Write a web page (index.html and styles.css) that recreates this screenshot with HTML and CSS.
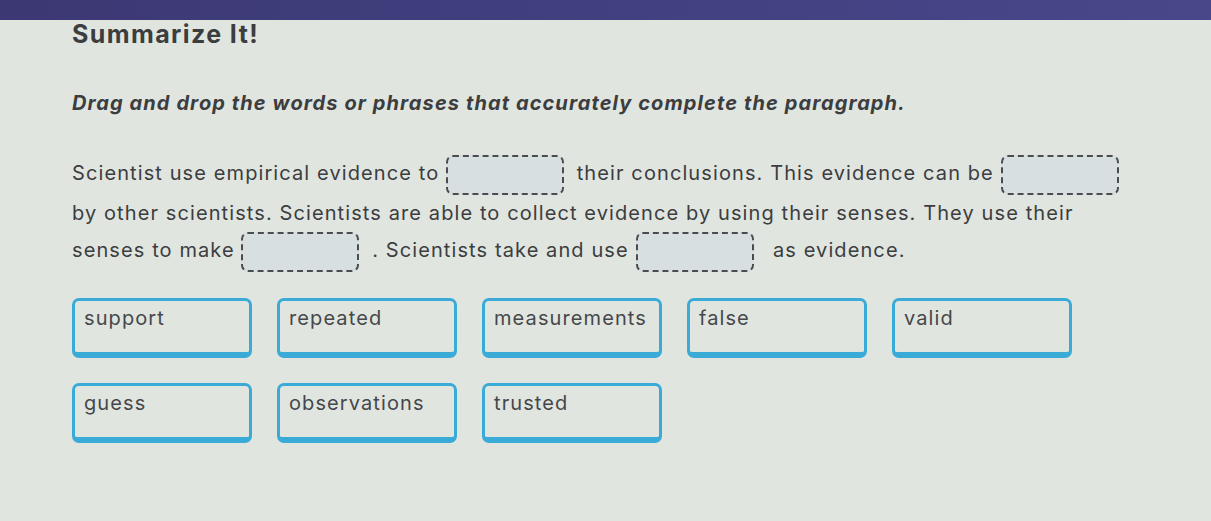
FILE: index.html
```html
<!DOCTYPE html>
<html lang="en">
<head>
    <meta charset="UTF-8">
    <meta name="viewport" content="width=device-width, initial-scale=1.0">
    <title>Summarize It!</title>
    <link rel="stylesheet" href="styles.css">
</head>
<body>
    <div class="topbar"></div>

    <div class="content">
        <h1 class="title">Summarize It!</h1>
        <p class="instructions">Drag and drop the words or phrases that accurately complete the paragraph.</p>

        <p class="passage">
            Scientist use empirical evidence to <span class="blank"></span> their conclusions. This evidence can be <span class="blank"></span>
            by other scientists. Scientists are able to collect evidence by using their senses. They use their
            senses to make <span class="blank"></span> . Scientists take and use <span class="blank"></span> &nbsp;as evidence.
        </p>

        <div class="word-bank">
            <div class="word">support</div>
            <div class="word">repeated</div>
            <div class="word">measurements</div>
            <div class="word">false</div>
            <div class="word">valid</div>
            <div class="word">guess</div>
            <div class="word">observations</div>
            <div class="word">trusted</div>
        </div>
    </div>
</body>
</html>
```

FILE: styles.css
```css
body {
    margin: 0;
    padding: 0;
    background-color: #e1e5df;
    color: #3b3d3f;
    font-family: Inter, "Liberation Sans", Arial, sans-serif;
}

.topbar {
    height: 20px;
    background: linear-gradient(to right, #3b3874, #48478a);
}

.content {
    padding-left: 72px;
}

.title {
    margin: 0;
    font-size: 25px;
    line-height: 28px;
    font-weight: 700;
    letter-spacing: 1.4px;
}

.instructions {
    margin: 43px 0 0;
    font-size: 20px;
    font-weight: 700;
    font-style: italic;
    letter-spacing: 1.1px;
}

.passage {
    margin: 40px 0 0;
    max-width: 1072px;
    font-size: 20px;
    line-height: 37px;
    letter-spacing: 1.1px;
}

.blank {
    display: inline-block;
    width: 114px;
    height: 36px;
    margin-right: 6px;
    vertical-align: middle;
    border: 2px dashed #4a4c50;
    border-radius: 7px;
    background-color: #d8dfe1;
}

.word-bank {
    display: grid;
    grid-template-columns: repeat(5, 180px);
    gap: 25px;
    margin-top: 26px;
}

.word {
    height: 46px;
    padding: 5px 9px 0;
    border: 3px solid #3aaad6;
    border-bottom-width: 6px;
    border-radius: 7px;
    font-size: 20px;
    letter-spacing: 1.1px;
    color: #45484b;
}
```
